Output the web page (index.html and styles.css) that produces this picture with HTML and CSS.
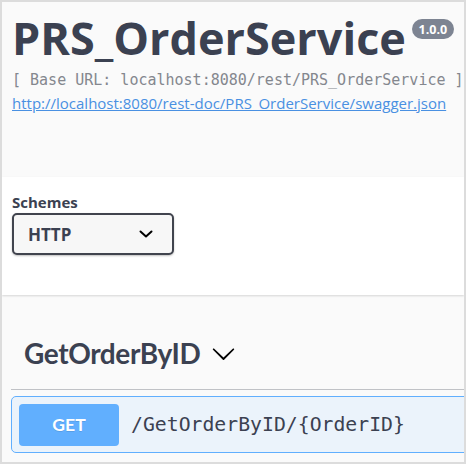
FILE: index.html
```html
<!DOCTYPE html>
<html>
<head>
<meta charset="utf-8">
<link rel="stylesheet" href="styles.css">
</head>
<body>
<div class="frame">
  <div class="info">
    <h2 class="title">PRS_OrderService <span class="version">1.0.0</span></h2>
    <div class="base-url">[ Base URL: localhost:8080/rest/PRS_OrderService ]</div>
    <a class="spec-link" href="#">http://localhost:8080/rest-doc/PRS_OrderService/swagger.json</a>
  </div>
  <div class="scheme-container">
    <div class="schemes-title">Schemes</div>
    <div class="select">
      <span>HTTP</span>
      <svg class="select-arrow" width="14" height="8" viewBox="0 0 14 8"><path d="M1.5 1.5 L7 6.5 L12.5 1.5" fill="none" stroke="#000" stroke-width="2" stroke-linecap="round" stroke-linejoin="round"/></svg>
    </div>
  </div>
  <div class="tag-section">
    <h4 class="tag-heading">
      <span>GetOrderByID</span>
      <svg class="tag-arrow" width="25" height="25" viewBox="0 0 20 20"><path d="M17.418 6.109c.272-.268.709-.268.979 0s.271.701 0 .969l-7.908 7.83c-.27.268-.707.268-.979 0l-7.908-7.83c-.27-.268-.27-.701 0-.969.271-.268.709-.268.979 0L10 13.25l7.418-7.141z"/></svg>
    </h4>
    <div class="opblock">
      <span class="method">GET</span>
      <span class="path">/GetOrderByID/{OrderID}</span>
    </div>
  </div>
</div>
</body>
</html>
```
FILE: styles.css
```css
html, body { margin: 0; padding: 0; }
body { font-family: "Open Sans", sans-serif; color: #3b4151; }
.frame {
  width: 466px; height: 464px; box-sizing: border-box;
  border: 2px solid #dcdcdc; background: #fafafa; overflow: hidden;
}
.info { padding: 8px 0 0 10px; height: 175px; box-sizing: border-box; }
.title {
  margin: 0; font-size: 45px; font-weight: 700; line-height: 56px; color: #3b4151;
  white-space: nowrap;
}
.version {
  display: inline-block; vertical-align: top; margin-top: 9px; margin-left: -6px;
  background: #7d8492; color: #fff; font-size: 12.5px; font-weight: 700;
  line-height: 15px; padding: 2.5px 7px; border-radius: 57px;
}
.base-url {
  font-family: "DejaVu Sans Mono", monospace; font-size: 15px; color: #84878e;
  line-height: 22px; margin-top: 3px; white-space: nowrap; font-weight: 300;
}
.spec-link {
  display: inline-block; font-size: 15px; color: #4990e2; line-height: 24px;
  white-space: nowrap;
}
.scheme-container {
  background: #fff; box-shadow: 0 1px 2px 0 rgba(0,0,0,.15);
  padding: 15px 10px 39px; height: 118px; box-sizing: border-box;
}
.schemes-title { font-size: 15px; font-weight: 700; line-height: 20px; margin-bottom: 1px; }
.select {
  display: flex; align-items: center; justify-content: space-between;
  width: 162px; height: 42px; box-sizing: border-box;
  border: 2px solid #41444e; border-radius: 5px; background: #f7f7f7;
  box-shadow: 0 1px 2px 0 rgba(0,0,0,.25);
  padding: 0 19px 0 14px; font-size: 17px; font-weight: 700; color: #3b4151;
}
.select-arrow { display: block; }
.tag-section { padding: 0 0 0 9px; margin-right: -20px; margin-top: 24px; }
.tag-heading {
  margin: 0 0 6px; display: flex; align-items: center; height: 71px; box-sizing: border-box;
  padding: 13px 0 15px 13px; border-bottom: 1px solid rgba(59,65,81,.3);
  font-family: "Lato", sans-serif; font-size: 28px; font-weight: 700; color: #3b4151;
  letter-spacing: -0.4px;
}
.tag-arrow { margin-left: 11px; }
.opblock {
  display: flex; align-items: center; height: 57px; box-sizing: border-box;
  border: 1px solid #61affe; border-radius: 5px; background: #ebf3fb;
  padding: 0 7px;
}
.method {
  width: 100px; height: 42px; display: flex; align-items: center; justify-content: center;
  background: #61affe; color: #fff; border-radius: 4px;
  font-family: "Lato", sans-serif; font-size: 17.5px; font-weight: 700;
  text-shadow: 0 1px 0 rgba(0,0,0,.1);
}
.path {
  padding-left: 12px; font-family: "DejaVu Sans Mono", monospace; font-size: 19.8px; color: #3b4151;
}
```
